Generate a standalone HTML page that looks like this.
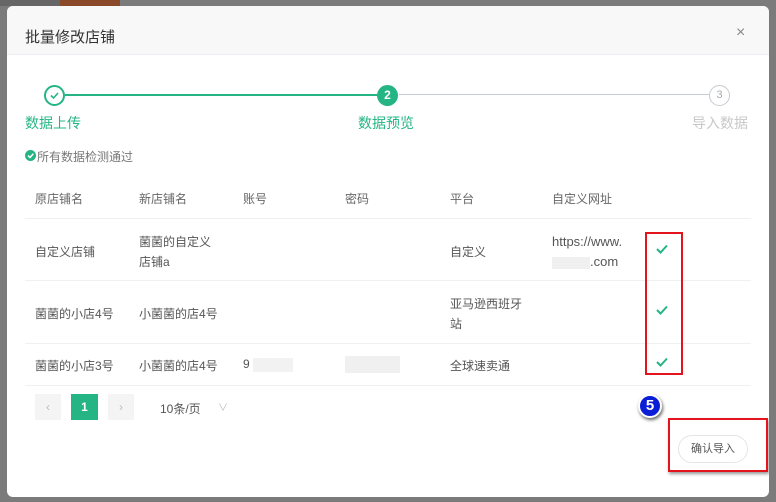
<!DOCTYPE html>
<html><head><meta charset="utf-8"><style>
*{margin:0;padding:0;box-sizing:border-box}
body{width:776px;height:502px;background:#7b7b7b;font-family:"Liberation Sans","Noto Sans CJK SC",sans-serif;position:relative;overflow:hidden;color:#555}
.a{position:absolute}
.modal{left:7px;top:6px;width:762px;height:491px;background:#fff;border-radius:6px;overflow:hidden}
.hd{left:0;top:0;width:762px;height:49px;background:#f8f8f9;border-bottom:1px solid #eceef3}
.t{font-size:12px;color:#555;white-space:nowrap}
.line{height:1px;background:#eef0f4}
</style></head><body>
<div class="a" style="left:0;top:0;width:60px;height:6px;background:#666"></div>
<div class="a" style="left:60px;top:0;width:60px;height:6px;background:#8a4a2a"></div>
<div class="a modal">
 <div class="a hd"></div>
 <div class="a" style="left:18px;top:20px;font-size:15px;color:#333">批量修改店铺</div>
 <div class="a" style="left:729px;top:18px;font-size:16px;color:#888">×</div>
 <!-- steps -->
 <div class="a" style="left:58px;top:88px;width:313px;height:2px;background:#25b584"></div>
 <div class="a" style="left:392px;top:88px;width:310px;height:1px;background:#c5cad3"></div>
 <div class="a" style="left:37px;top:79px;width:21px;height:21px;border:2px solid #25b584;border-radius:50%;background:#fff"></div>
 <svg class="a" style="left:42px;top:84px" width="11" height="11"><path d="M2 5.5 L4.5 8 L9 3" stroke="#25b584" stroke-width="1.6" fill="none"/></svg>
 <div class="a" style="left:370px;top:79px;width:21px;height:21px;border-radius:50%;background:#25b584;color:#fff;font-size:12px;font-weight:bold;text-align:center;line-height:21px">2</div>
 <div class="a" style="left:702px;top:79px;width:21px;height:21px;border:1.5px solid #c5cad3;border-radius:50%;background:#fff;color:#aaa;font-size:11px;text-align:center;line-height:18px">3</div>
 <div class="a" style="left:18px;top:107px;font-size:14px;color:#25b584">数据上传</div>
 <div class="a" style="left:351px;top:107px;font-size:14px;color:#25b584">数据预览</div>
 <div class="a" style="left:685px;top:107px;font-size:14px;color:#c8c8c8">导入数据</div>
 <div class="a" style="left:18px;top:144px;width:11px;height:11px;border-radius:50%;background:#25b584"></div>
 <svg class="a" style="left:18px;top:144px" width="11" height="11"><path d="M3 5.5 L5 7.5 L8.3 3.8" stroke="#fff" stroke-width="1.5" fill="none"/></svg>
 <div class="a" style="left:30px;top:142px;font-size:12px;color:#777">所有数据检测通过</div>
 <!-- table -->
 <div class="a t" style="left:28px;top:184px;color:#666">原店铺名</div>
 <div class="a t" style="left:132px;top:184px;color:#666">新店铺名</div>
 <div class="a t" style="left:236px;top:184px;color:#666">账号</div>
 <div class="a t" style="left:338px;top:184px;color:#666">密码</div>
 <div class="a t" style="left:443px;top:184px;color:#666">平台</div>
 <div class="a t" style="left:545px;top:184px;color:#666">自定义网址</div>
 <div class="a line" style="left:18px;top:212px;width:726px"></div>
 <div class="a t" style="left:28px;top:237px">自定义店铺</div>
 <div class="a t" style="left:132px;top:226px;line-height:20px">菌菌的自定义<br>店铺a</div>
 <div class="a t" style="left:443px;top:237px">自定义</div>
 <div class="a t" style="left:545px;top:226px;font-size:13px;line-height:20px">https://www.<br><span style="display:inline-block;width:38px;height:12px;background:#f0f0f0;vertical-align:middle"></span>.com</div>
 <div class="a line" style="left:18px;top:274px;width:726px"></div>
 <div class="a t" style="left:28px;top:299px">菌菌的小店4号</div>
 <div class="a t" style="left:132px;top:299px">小菌菌的店4号</div>
 <div class="a t" style="left:443px;top:288px;line-height:20px">亚马逊西班牙<br>站</div>
 <div class="a line" style="left:18px;top:337px;width:726px"></div>
 <div class="a t" style="left:28px;top:351px">菌菌的小店3号</div>
 <div class="a t" style="left:132px;top:351px">小菌菌的店4号</div>
 <div class="a t" style="left:236px;top:351px">9</div>
 <div class="a" style="left:246px;top:352px;width:40px;height:14px;background:#f2f2f2"></div>
 <div class="a" style="left:338px;top:350px;width:55px;height:17px;background:#f0f0f0"></div>
 <div class="a t" style="left:443px;top:351px">全球速卖通</div>
 <div class="a line" style="left:18px;top:379px;width:726px"></div>
 <svg class="a" style="left:648px;top:237px" width="14" height="12"><path d="M2 6 L5.5 9.5 L12 2.5" stroke="#25b584" stroke-width="2" fill="none"/></svg>
 <svg class="a" style="left:648px;top:298px" width="14" height="12"><path d="M2 6 L5.5 9.5 L12 2.5" stroke="#25b584" stroke-width="2" fill="none"/></svg>
 <svg class="a" style="left:648px;top:350px" width="14" height="12"><path d="M2 6 L5.5 9.5 L12 2.5" stroke="#25b584" stroke-width="2" fill="none"/></svg>
 <div class="a" style="left:638px;top:226px;width:38px;height:143px;border:2px solid #e3141b"></div>
 <!-- pagination -->
 <div class="a" style="left:28px;top:388px;width:26px;height:26px;background:#f4f4f5;color:#bbb;font-size:12px;text-align:center;line-height:26px">‹</div>
 <div class="a" style="left:64px;top:388px;width:27px;height:26px;background:#25b584;color:#fff;font-size:12px;font-weight:bold;text-align:center;line-height:26px">1</div>
 <div class="a" style="left:101px;top:388px;width:26px;height:26px;background:#f4f4f5;color:#bbb;font-size:12px;text-align:center;line-height:26px">›</div>
 <div class="a t" style="left:153px;top:394px">10条/页</div>
 <div class="a t" style="left:211px;top:393px;color:#bbb;font-size:10px">∨</div>
 <div class="a" style="left:631px;top:388px;width:24px;height:24px;border-radius:50%;background:#0a1ed8;border:2px solid #fff;box-shadow:1px 2px 3px #666;color:#fff;font-weight:bold;font-size:15px;text-align:center;line-height:20px">5</div>
 <div class="a" style="left:661px;top:412px;width:100px;height:54px;border:2px solid #e3141b;box-shadow:1px 2px 3px #999"></div>
 <div class="a" style="left:671px;top:429px;width:70px;height:28px;border:1px solid #e5e5e5;border-radius:14px;background:#fff;font-size:11px;color:#555;text-align:center;line-height:26px">确认导入</div>
</div>
</body></html>
